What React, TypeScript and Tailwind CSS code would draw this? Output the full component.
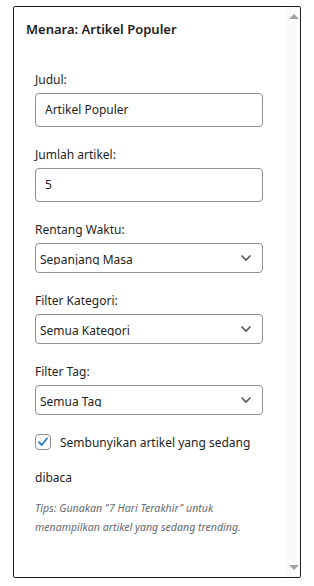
import { useState } from 'react'

function Chevron() {
  return (
    <svg width="12" height="8" viewBox="0 0 12 8" className="absolute right-[10px] top-1/2 -translate-y-1/2 pointer-events-none">
      <path d="M1.5 1.5 L6 6 L10.5 1.5" fill="none" stroke="#555" strokeWidth="1.6" />
    </svg>
  )
}

function Field({ label, children }: { label: string; children: React.ReactNode }) {
  return (
    <div className="flex flex-col">
      <label className="text-[12px] leading-[18px] text-[#1e1e1e] mb-[4px]">{label}</label>
      {children}
    </div>
  )
}

function TextInput({ value }: { value: string }) {
  return (
    <div className="w-[228px] h-[34px] border border-[#8c8f94] rounded-[4px] bg-white pl-[9px] flex items-center text-[12px] text-[#1e1e1e]">
      {value}
    </div>
  )
}

// the native select in the shot clips the descenders of its value
function Select({ value }: { value: string }) {
  return (
    <div className="relative w-[228px] h-[30px] border border-[#8c8f94] rounded-[4px] bg-white">
      <div className="pl-[4px] pt-[7px] h-[21px] overflow-hidden text-[12px] leading-[18px] text-[#1e1e1e] whitespace-nowrap">{value}</div>
      <Chevron />
    </div>
  )
}

export default function App() {
  const [checked, setChecked] = useState(true)
  return (
    <div className="w-[314px] h-[586px] bg-white pt-[6px] pl-[13px]" style={{ fontFamily: '"Noto Sans", "Open Sans", sans-serif' }}>
      <div className="flex w-[288px] h-[572px] border border-[#1e1e1e] rounded-[2px] overflow-hidden">
        <div className="flex-1 flex flex-col">
          <h3 className="pl-[12px] pt-[13px] text-[13px] leading-[18px] font-semibold text-[#1e1e1e]">Menara: Artikel Populer</h3>
          <div className="pl-[21px] pt-[33px] flex flex-col gap-[19px]">
            <Field label="Judul:">
              <TextInput value="Artikel Populer" />
            </Field>
            <Field label="Jumlah artikel:">
              <TextInput value="5" />
            </Field>
            <Field label="Rentang Waktu:">
              <Select value="Sepanjang Masa" />
            </Field>
            <Field label="Filter Kategori:">
              <Select value="Semua Kategori" />
            </Field>
            <Field label="Filter Tag:">
              <Select value="Semua Tag" />
            </Field>
          </div>
          <div className="pl-[21px] pt-[10px] w-[260px] text-[12px] leading-[35px] text-[#1e1e1e]">
            <button
              type="button"
              onClick={() => setChecked(!checked)}
              className="inline-flex align-middle mr-[9px] -mt-[3px] w-[16px] h-[16px] border border-[#8c8f94] rounded-[4px] bg-white items-center justify-center"
            >
              {checked && (
                <svg width="12" height="12" viewBox="0 0 12 12">
                  <path d="M2 6.2 L4.8 9 L10 2.5" fill="none" stroke="#3582c4" strokeWidth="2" strokeLinecap="round" strokeLinejoin="round" />
                </svg>
              )}
            </button>
            Sembunyikan artikel yang sedang dibaca
          </div>
          <p className="ml-[21px] mt-[4px] w-[215px] text-[10.6px] leading-[19px] italic text-[#646970]">
            Tips: Gunakan "7 Hari Terakhir" untuk menampilkan artikel yang sedang trending.
          </p>
        </div>
        <div className="w-[13px] bg-[#fafafa] flex flex-col justify-between items-center py-[7px]">
          <div className="w-0 h-0 border-l-[5px] border-r-[5px] border-b-[5px] border-l-transparent border-r-transparent border-b-[#a3a3a3]" />
          <div className="w-0 h-0 border-l-[5px] border-r-[5px] border-t-[5px] border-l-transparent border-r-transparent border-t-[#a3a3a3]" />
        </div>
      </div>
    </div>
  )
}
